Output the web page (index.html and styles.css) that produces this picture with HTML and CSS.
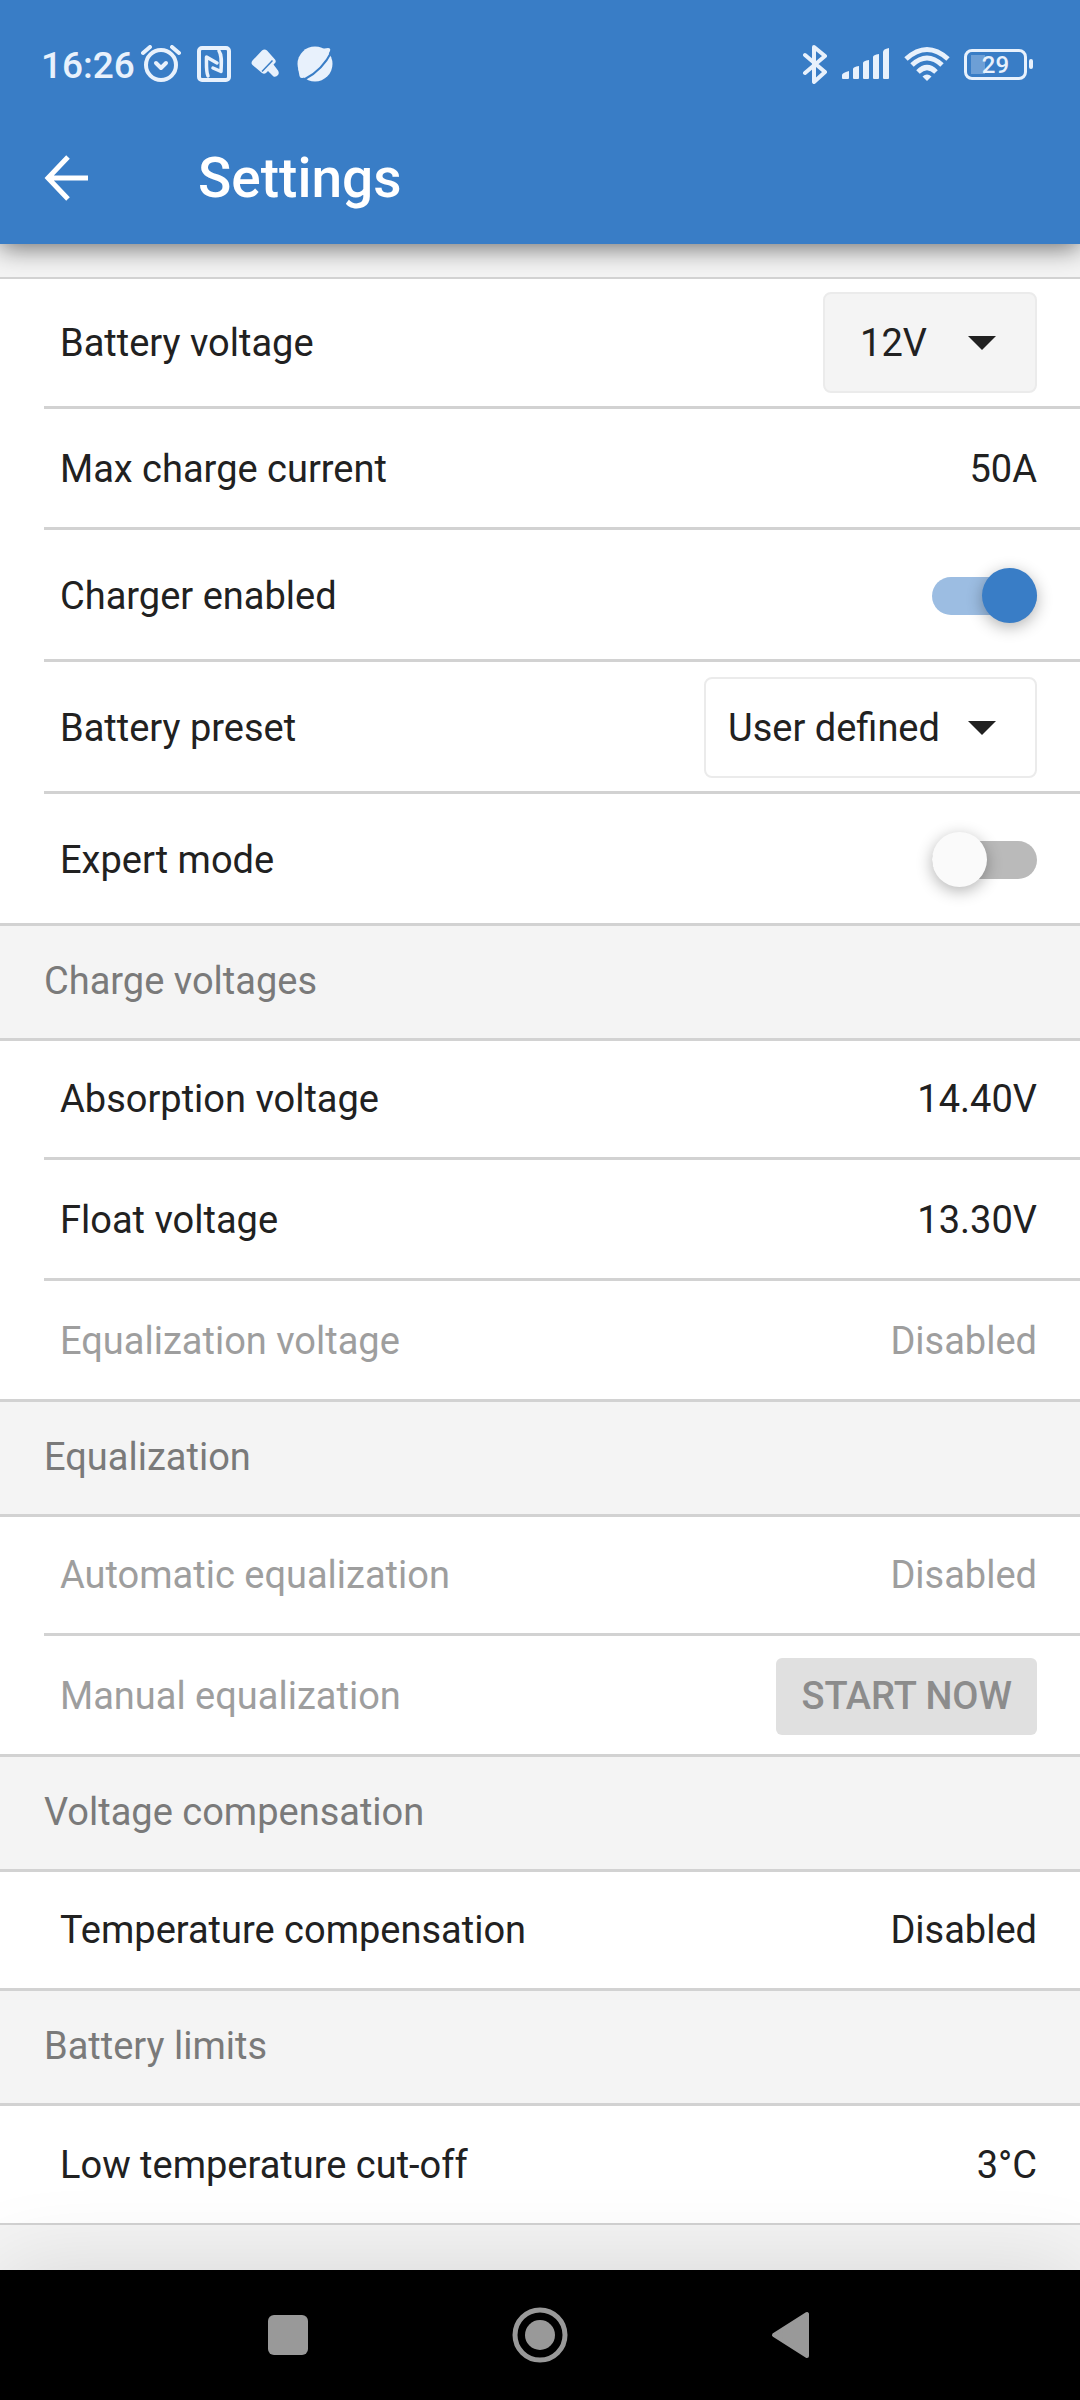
FILE: index.html
```
<!DOCTYPE html>
<html lang="en">
<head>
    <meta charset="UTF-8">
    <meta name="viewport" content="width=device-width, initial-scale=1.0">
    <title>Settings</title>
    <link rel="stylesheet" href="styles.css">
</head>
<body>
    <header class="app-header">
        <div class="status-bar">
            <div class="status-left">
                <span class="clock">16:26</span>
                <!-- Alarm -->
                <svg width="40" height="38" viewBox="0 0 40 38" fill="none" stroke="currentColor" stroke-linecap="round" stroke-linejoin="round">
                    <circle cx="20" cy="20" r="15" stroke-width="4"/>
                    <path d="M15 18l5 5 5-5" stroke-width="4"/>
                    <path d="M2 8l7-6M38 8l-7-6" stroke-width="4"/>
                </svg>
                <!-- NFC -->
                <svg width="34" height="36" viewBox="0 0 34 36" fill="none" stroke="currentColor" stroke-linecap="round" stroke-linejoin="round">
                    <rect x="2" y="2" width="30" height="32" rx="3" stroke-width="4"/>
                    <path d="M11 30C9 26 9.500 20 9.500 11L20 17M16 22l8 3.500C24.500 16 25 9 22 5" stroke-width="3.500"/>
                </svg>
                <!-- Cleaner brush -->
                <svg class="icon-brush" width="28" height="30" viewBox="0 0 28 30">
                    <path d="M11 1.500q2.500-2 5 0l8 9q1.500 2 0 3.500l-1.500 1.500 4.500 6q1.500 2.500 0 4.500-2 2.500-4.500 1.500l-5.500-5.500-2 2q-2 1.500-4 0L1.500 16q-2-2 0-4.500z" fill="currentColor"/>
                    <path d="M11 22.500L21.500 11.500" stroke="#397dc6" stroke-width="1.500"/>
                </svg>
                <!-- Planet -->
                <svg width="36" height="36" viewBox="0 0 36 36">
                    <circle cx="18" cy="18" r="17.500" fill="currentColor"/>
                    <path d="M24 3l7-1q3 0 2 3l-3 6zM1 22l1.500 8q.5 2.500 3 2l7-2z" fill="currentColor"/>
                    <path d="M35 5C29 17 20 27 8 33" fill="none" stroke="#397dc6" stroke-width="2"/>
                </svg>
            </div>
            <div class="status-right">
                <!-- Bluetooth -->
                <svg width="26" height="40" viewBox="0 0 26 40" fill="none" stroke="currentColor" stroke-width="4" stroke-linecap="round" stroke-linejoin="round">
                    <path d="M3 11l20 17-11 10V3l11 9L3 29"/>
                </svg>
                <!-- Signal -->
                <svg width="48" height="32" viewBox="0 0 48 32" fill="currentColor">
                    <path d="M0 27q0-2 7-4v7q0 1-1 1H1q-1 0-1-1z"/>
                    <path d="M11 21q0-2 6-3v12q0 1-1 1h-4q-1 0-1-1z"/>
                    <path d="M21 15q0-2 6-3v18q0 1-1 1h-4q-1 0-1-1z"/>
                    <path d="M31 9q0-2 6-3v24q0 1-1 1h-4q-1 0-1-1z"/>
                    <path d="M41 4q0-3 6-4v30q0 1-1 1h-4q-1 0-1-1z"/>
                </svg>
                <!-- Wi-Fi -->
                <svg width="46" height="36" viewBox="0 0 46 36" fill="none" stroke="currentColor" stroke-width="5">
                    <path d="M2 13Q23-6 44 13"/>
                    <path d="M8 19Q23 5 38 19"/>
                    <path d="M14 26Q23 17 32 26"/>
                    <path d="M18.500 30.500q4.500-4 9 0L23 35z" fill="currentColor" stroke="none"/>
                </svg>
                <div class="battery"><span class="battery-level">29</span></div>
            </div>
        </div>
        <div class="title-bar">
            <button type="button" class="back-button" aria-label="Back">
                <svg width="44" height="46" viewBox="0 0 44 46" fill="none" stroke="currentColor" stroke-width="5">
                    <path d="M44 23H4M24 2L4 23l20 21"/>
                </svg>
            </button>
            <h1>Settings</h1>
        </div>
    </header>

    <main class="settings">
        <ul class="group">
            <li class="row row-tall">
                <label for="batteryVoltage">Battery voltage</label>
                <select id="batteryVoltage" class="select select-filled">
                    <option>12V</option>
                </select>
            </li>
            <li class="row">
                <span>Max charge current</span>
                <span class="value">50A</span>
            </li>
            <li class="row row-tall">
                <label for="chargerEnabled">Charger enabled</label>
                <input type="checkbox" id="chargerEnabled" class="switch" checked>
            </li>
            <li class="row row-tall">
                <label for="batteryPreset">Battery preset</label>
                <select id="batteryPreset" class="select">
                    <option>User defined</option>
                </select>
            </li>
            <li class="row row-tall">
                <label for="expertMode">Expert mode</label>
                <input type="checkbox" id="expertMode" class="switch">
            </li>
        </ul>

        <h2>Charge voltages</h2>
        <ul class="group">
            <li class="row">
                <span>Absorption voltage</span>
                <span class="value">14.40V</span>
            </li>
            <li class="row">
                <span>Float voltage</span>
                <span class="value">13.30V</span>
            </li>
            <li class="row disabled">
                <span>Equalization voltage</span>
                <span class="value">Disabled</span>
            </li>
        </ul>

        <h2>Equalization</h2>
        <ul class="group">
            <li class="row disabled">
                <span>Automatic equalization</span>
                <span class="value">Disabled</span>
            </li>
            <li class="row disabled">
                <span>Manual equalization</span>
                <button type="button" class="start-button" disabled>START NOW</button>
            </li>
        </ul>

        <h2>Voltage compensation</h2>
        <ul class="group">
            <li class="row">
                <span>Temperature compensation</span>
                <span class="value">Disabled</span>
            </li>
        </ul>

        <h2>Battery limits</h2>
        <ul class="group">
            <li class="row">
                <span>Low temperature cut-off</span>
                <span class="value">3°C</span>
            </li>
        </ul>
    </main>

    <nav class="nav-bar">
        <button type="button" aria-label="Recent apps">
            <svg width="56" height="56" viewBox="0 0 56 56" fill="currentColor">
                <rect x="8" y="8" width="40" height="40" rx="6"/>
            </svg>
        </button>
        <button type="button" aria-label="Home">
            <svg width="56" height="56" viewBox="0 0 56 56" fill="currentColor">
                <circle cx="28" cy="28" r="25" fill="none" stroke="currentColor" stroke-width="5"/>
                <circle cx="28" cy="28" r="15"/>
            </svg>
        </button>
        <button type="button" aria-label="Back">
            <svg width="56" height="56" viewBox="0 0 56 56" fill="currentColor" stroke="currentColor" stroke-width="4" stroke-linejoin="round">
                <path d="M10 28L43 7v42z"/>
            </svg>
        </button>
    </nav>
</body>
</html>
```
FILE: styles.css
```
* {
    box-sizing: border-box;
}
body {
    font-family: Roboto, sans-serif;
    font-size: 38px;
    line-height: 48px;
    color: #212121;
    background-color: #f4f4f4;
    margin: 0;
    min-height: 100vh;
    display: flex;
    flex-direction: column;
}
h1, h2, ul {
    margin: 0;
    padding: 0;
    font-weight: 400;
}
button {
    font-family: inherit;
    border: none;
    padding: 0;
}
svg {
    display: block;
}

/* Header */
.app-header {
    background-color: #397dc6;
    color: white;
    box-shadow: 0 4px 24px rgba(0, 0, 0, 0.55);
}
.status-bar {
    display: flex;
    justify-content: space-between;
    height: 112px;
    padding: 16px 47px 0 41px;
    color: #e8f1fc;
}
.status-left, .status-right {
    display: flex;
    align-items: center;
}
.status-left {
    gap: 16px;
}
.status-right {
    gap: 14px;
}
.clock {
    font-size: 37px;
    font-weight: 500;
    padding-top: 3px;
    margin-right: -10px;
}
.icon-brush {
    margin: 0 2px 0 4px;
}
.battery {
    display: flex;
    align-items: center;
}
.battery::after {
    content: "";
    width: 4px;
    height: 10px;
    margin-left: 2px;
    border-radius: 2px;
    background-color: currentColor;
}
.battery-level {
    width: 63px;
    height: 31px;
    border: 3px solid currentColor;
    border-radius: 8px;
    font-size: 24px;
    font-weight: 500;
    line-height: 26px;
    text-align: center;
    background: linear-gradient(to right, #6d9fd6 14px, transparent 14px) 4px 3px / 55px 19px no-repeat;
}
.title-bar {
    display: flex;
    align-items: center;
    height: 132px;
    padding-left: 44px;
}
.back-button {
    background: none;
    color: white;
    margin-right: 110px;
}
h1 {
    font-size: 55px;
    font-weight: 500;
    line-height: 64px;
}

/* Settings list */
.settings {
    flex: 1;
    padding-top: 33px;
}
.group {
    list-style: none;
    background-color: white;
}
.group:first-child {
    border-top: 2px solid #d2d2d2;
}
.row {
    display: flex;
    align-items: center;
    justify-content: space-between;
    min-height: 121px;
    margin-left: 44px;
    padding: 2px 43px 0 16px;
    border-bottom: 3px solid #d2d2d2;
}
.row:first-child {
    min-height: 119px;
    padding-top: 0;
}
.row:last-child {
    margin-left: 0;
    padding-left: 60px;
}
.group:last-child .row {
    border-bottom-width: 2px;
}
.row-tall {
    min-height: 132px;
}
.row-tall:first-child {
    min-height: 130px;
}
.disabled {
    color: #9e9e9e;
}
h2 {
    font-size: 38px;
    line-height: 48px;
    padding: 31px 44px 33px;
    color: #7a7a7a;
    border-bottom: 3px solid #d2d2d2;
}

/* Controls */
.select {
    appearance: none;
    min-width: 214px;
    height: 101px;
    padding: 0 95px 0 22px;
    font: inherit;
    color: inherit;
    text-align: center;
    border: 2px solid #ebebeb;
    border-radius: 8px;
    background: white url("data:image/svg+xml,%3Csvg xmlns='http://www.w3.org/2000/svg' width='28' height='14'%3E%3Cpath d='M0 0h28L14 14z' fill='%23212121'/%3E%3C/svg%3E") right 39px center no-repeat;
}
.select-filled {
    background-color: #f4f4f4;
}
.switch {
    appearance: none;
    display: grid;
    align-items: center;
    width: 105px;
    height: 55px;
    margin: 0;
}
.switch::before, .switch::after {
    content: "";
    grid-area: 1 / 1;
}
.switch::before {
    height: 38px;
    border-radius: 19px;
    background-color: #bababa;
}
.switch::after {
    width: 55px;
    height: 55px;
    border-radius: 50%;
    background-color: #fafafa;
    box-shadow: 0 4px 16px rgba(0, 0, 0, 0.3);
}
.switch:checked::before {
    background-color: #9cbde2;
}
.switch:checked::after {
    justify-self: end;
    background-color: #397dc6;
}
.start-button {
    height: 77px;
    padding: 0 25px;
    font-size: 38px;
    font-weight: 500;
    color: #8c8c8c;
    background-color: #e0e0e0;
    border-radius: 6px;
}

/* System navigation */
.nav-bar {
    display: flex;
    justify-content: space-between;
    align-items: center;
    height: 130px;
    padding: 0 260px;
    background-color: black;
    box-shadow: 0 0 90px rgba(0, 0, 0, 0.12);
}
.nav-bar button {
    background: none;
    color: #999;
}
```
